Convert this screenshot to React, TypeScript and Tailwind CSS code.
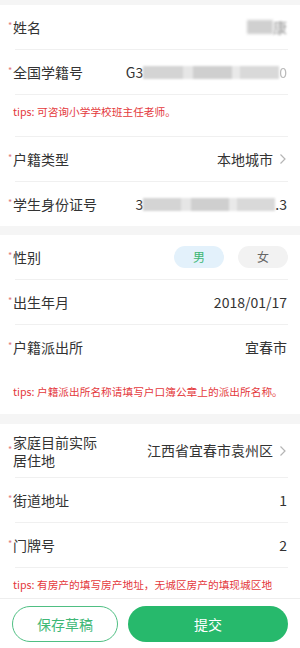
import React from 'react';

const font = { fontFamily: '"Noto Sans CJK SC", "Noto Sans", sans-serif' };

function Divider() {
  return <div className="ml-[15px] mr-[12px] h-px bg-[#f0f0f0]" />;
}

function Chevron() {
  return (
    <svg width="8" height="12" viewBox="0 0 8 12" className="ml-[6px] shrink-0">
      <polyline points="1.5,1.5 6,6 1.5,10.5" fill="none" stroke="#b5b5b5" strokeWidth="1.2" />
    </svg>
  );
}

function Label({ children, wide }: { children: React.ReactNode; wide?: boolean }) {
  return (
    <div className="flex items-center shrink-0">
      <span className="w-[6px] pl-[1px] text-[9px] leading-none text-[#e07a7a] -mt-[3px]">*</span>
      <span className={`text-[14px] leading-[18px] text-[#333] ${wide ? 'w-[90px]' : ''}`}>{children}</span>
    </div>
  );
}

function Row({ label, children, h = 'h-[44px]', wide }: { label: React.ReactNode; children?: React.ReactNode; h?: string; wide?: boolean }) {
  return (
    <div className={`flex items-center justify-between pl-[7px] pr-[13px] ${h}`}>
      <Label wide={wide}>{label}</Label>
      <div className="flex items-center text-[14px] text-[#333]">{children}</div>
    </div>
  );
}

function Tips({ text, h, pt }: { text: string; h: string; pt: string }) {
  return (
    <div className={`pl-[13px] pr-[8px] ${h} ${pt} text-[10.7px] leading-[14px] text-[#e4393c] whitespace-nowrap overflow-hidden`}>
      tips: {text}
    </div>
  );
}

function Blur({ w }: { w: string }) {
  return (
    <div className={`${w} h-[13px] flex items-center blur-[1.2px]`}>
      <div className="h-full flex-1 bg-[#d4d4d4]" />
      <div className="h-full w-[10px] bg-[#e6e6e6]" />
      <div className="h-full flex-1 bg-[#cfcfcf]" />
      <div className="h-full w-[8px] bg-[#e9e9e9]" />
      <div className="h-full flex-1 bg-[#d9d9d9]" />
    </div>
  );
}

export default function App() {
  return (
    <div style={font} className="w-[300px] h-[648px] bg-[#f5f5f5] flex flex-col overflow-hidden">
      <div className="flex-1 overflow-hidden pt-[5px]">
        <div className="bg-white">
          <Row label="姓名">
            <div className="w-[26px] h-[14px] bg-[#d0d0d0] blur-[1.5px]" />
            <span className="text-[#999] blur-[0.8px]">康</span>
          </Row>
          <Divider />
          <Row label="全国学籍号">
            <span>G3</span>
            <Blur w="w-[136px]" />
            <span className="text-[#bbb] blur-[0.6px]">0</span>
          </Row>
          <Divider />
          <Tips text="可咨询小学学校班主任老师。" h="h-[41px]" pt="pt-[10px]" />
          <Divider />
          <Row label="户籍类型">
            本地城市
            <Chevron />
          </Row>
          <Divider />
          <Row label="学生身份证号">
            <span>3</span>
            <Blur w="w-[132px]" />
            <span>.3</span>
          </Row>
        </div>

        <div className="bg-white mt-[9px]">
          <Row label="性别">
            <div className="w-[50px] h-[22px] rounded-full bg-[#e3f1fb] text-[#3ab673] text-[12px] flex items-center justify-center">男</div>
            <div className="w-[50px] h-[22px] ml-[14px] -mr-[1px] rounded-full bg-[#f2f2f2] text-[#666] text-[12px] flex items-center justify-center">女</div>
          </Row>
          <Divider />
          <Row label="出生年月">2018/01/17</Row>
          <Divider />
          <Row label="户籍派出所">宜春市</Row>
          <Tips text="户籍派出所名称请填写户口簿公章上的派出所名称。" h="h-[45px]" pt="pt-[16px]" />
        </div>

        <div className="bg-white mt-[10px]">
          <Row label="家庭目前实际居住地" h="h-[53px]" wide>
            江西省宜春市袁州区
            <Chevron />
          </Row>
          <Divider />
          <Row label="街道地址">1</Row>
          <Divider />
          <Row label="门牌号">2</Row>
          <Divider />
          <Tips text="有房产的填写房产地址，无城区房产的填现城区地" h="h-[40px]" pt="pt-[10px]" />
        </div>
      </div>

      <div className="h-[50px] shrink-0 bg-white border-t border-[#eeeeee] flex items-start pt-[7px] pl-[12px] pr-[12px] gap-[10px]">
        <button className="w-[106px] h-[36px] rounded-full border border-[#4fbf83] text-[#3fb877] text-[14px] bg-white">保存草稿</button>
        <button className="flex-1 h-[36px] rounded-full bg-[#27b96c] text-white text-[14px]">提交</button>
      </div>
    </div>
  );
}
